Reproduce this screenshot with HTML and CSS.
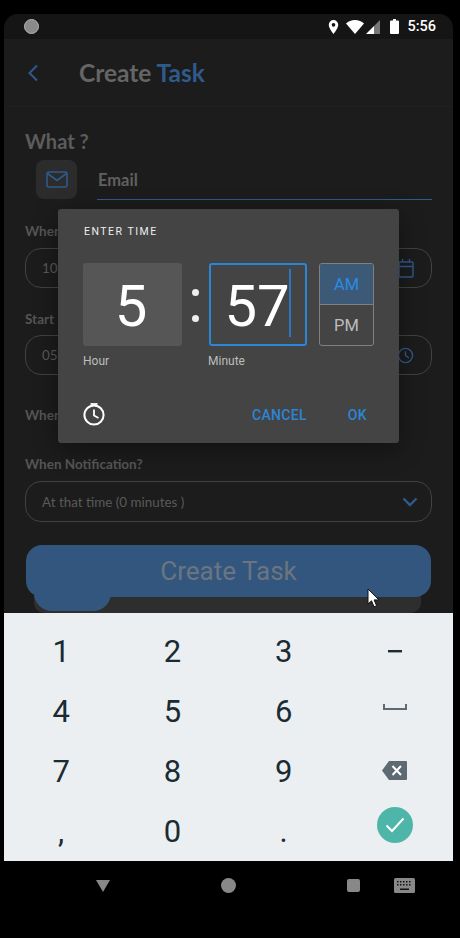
FILE: index.html
```html
<!DOCTYPE html>
<html lang="en">
<head>
<meta charset="utf-8">
<title>Create Task</title>
<link rel="stylesheet" href="styles.css">
</head>
<body>
<div class="phone">
  <div class="screen">
    <div class="status">
      <span class="dot"></span>
      <span class="status-right">
        <svg class="ic" width="11" height="14" viewBox="0 0 12 16"><path fill="#fff" fill-rule="evenodd" d="M6 0a5.400 5.400 0 0 0-5.400 5.400C.6 9.500 6 16 6 16s5.400-6.500 5.400-10.600A5.400 5.400 0 0 0 6 0zm0 3.400a2.100 2.100 0 1 1 0 4.200 2.100 2.100 0 0 1 0-4.200z"/></svg>
        <svg class="ic wifi" width="18" height="14" viewBox="0 0 18 14"><path fill="#fff" d="M0 3.500C2.400 1.300 5.500 0 9 0s6.600 1.300 9 3.500L9 14z"/></svg>
        <svg class="ic signal" width="14" height="14" viewBox="0 0 14 14"><path fill="#fff" d="M0 14 8 6v8z"/><path fill="#777" d="M8 6l6-6v14H8z"/></svg>
        <svg class="ic batt" width="9" height="15" viewBox="0 0 9 15"><path fill="#fff" d="M3 0h3v1.500h2a1 1 0 0 1 1 1V14a1 1 0 0 1-1 1H1a1 1 0 0 1-1-1V2.500a1 1 0 0 1 1-1h2z"/></svg>
        <span class="clock-text">5:56</span>
      </span>
    </div>
    <header class="appbar">
      <svg class="back" width="12" height="18" viewBox="0 0 12 18"><path fill="none" stroke="#2f5a8c" stroke-width="2" d="M10 1.500 2.500 9l7.500 7.500"/></svg>
      <h1 class="title">Create <span class="accent">Task</span></h1>
    </header>
    <main class="form">
      <h2 class="what">What ?</h2>
      <div class="type-row">
        <span class="type-icon">
          <svg width="22" height="17" viewBox="0 0 22 17"><rect x="1" y="1" width="20" height="15" rx="2" fill="none" stroke="#2f5a8c" stroke-width="1.600"/><path fill="none" stroke="#2f5a8c" stroke-width="1.600" d="M1.500 2.500 11 9.500l9.500-7"/></svg>
        </span>
        <span class="type-name">Email</span>
      </div>
      <label class="field-label first">When</label>
      <div class="field">
        <span>10/</span>
        <svg width="16" height="19" viewBox="0 0 16 19"><g fill="none" stroke="#2f5a8c" stroke-width="1.400"><rect x="1" y="3" width="14" height="15" rx="1"/><path d="M1 7.500h14M4.500 0v3M11.500 0v3"/></g></svg>
      </div>
      <label class="field-label start">Start</label>
      <div class="field second">
        <span>05:</span>
        <svg width="17" height="17" viewBox="0 0 18 18"><g fill="none" stroke="#2f5a8c" stroke-width="1.400"><circle cx="9" cy="9" r="7.500"/><path d="M9 4.500V9l3.500 2.500"/></g></svg>
      </div>
      <label class="field-label end">When</label>
      <label class="field-label notif">When Notification?</label>
      <div class="field select">
        <span>At that time (0 minutes )</span>
        <svg class="chev" width="16" height="10" viewBox="0 0 16 10"><path fill="none" stroke="#2f5a8c" stroke-width="2.400" d="M1.500 1.500 8 8l6.500-6.500"/></svg>
      </div>
      <div class="create">Create Task</div>
      <div class="under"><span class="blob"></span></div>
    </main>
    <section class="keyboard">
      <span class="key">1</span><span class="key">2</span><span class="key">3</span>
      <span class="key"><svg width="14" height="3" viewBox="0 0 14 3"><rect width="14" height="2.400" fill="#1f2b33"/></svg></span>
      <span class="key">4</span><span class="key">5</span><span class="key">6</span>
      <span class="key"><svg class="space" width="24" height="6" viewBox="0 0 24 6"><path fill="none" stroke="#5d6a71" stroke-width="2" d="M1 0v5h22V0"/></svg></span>
      <span class="key">7</span><span class="key">8</span><span class="key">9</span>
      <span class="key"><svg class="bksp" width="25" height="19" viewBox="0 0 25 19"><path fill="#5d6a71" d="M7 0h17a1 1 0 0 1 1 1v17a1 1 0 0 1-1 1H7L0 9.500z"/><path fill="none" stroke="#fff" stroke-width="2" d="M10.500 5l8.500 9M19 5l-8.500 9"/></svg></span>
      <span class="key">,</span><span class="key">0</span><span class="key">.</span>
      <span class="key"><span class="done"><svg width="20" height="16" viewBox="0 0 20 16"><path fill="none" stroke="#fff" stroke-width="2" d="M1.500 8.500 7 14 18.500 1.500"/></svg></span></span>
    </section>
    <nav class="navbar">
      <svg class="nav-back" width="14" height="12" viewBox="0 0 14 12"><path fill="#888" d="M0 0h14L7 12z"/></svg>
      <span class="nav-home"></span>
      <span class="nav-recent"></span>
      <svg class="nav-kb" width="21" height="15" viewBox="0 0 21 15"><rect width="21" height="15" rx="1.500" fill="#888"/><g fill="#111"><rect x="3" y="3" width="1.500" height="1.500"/><rect x="6" y="3" width="1.500" height="1.500"/><rect x="9" y="3" width="1.500" height="1.500"/><rect x="12" y="3" width="1.500" height="1.500"/><rect x="15" y="3" width="1.500" height="1.500"/><rect x="3" y="6" width="1.500" height="1.500"/><rect x="6" y="6" width="1.500" height="1.500"/><rect x="9" y="6" width="1.500" height="1.500"/><rect x="12" y="6" width="1.500" height="1.500"/><rect x="15" y="6" width="1.500" height="1.500"/><rect x="6" y="10.500" width="9" height="1.500"/></g></svg>
    </nav>
    <div class="dialog">
      <div class="dialog-title">ENTER TIME</div>
      <div class="time-row">
        <div class="time-col">
          <div class="time-box hour">5</div>
          <div class="time-label">Hour</div>
        </div>
        <div class="colon"><i></i><i></i></div>
        <div class="time-col">
          <div class="time-box minute">57<span class="caret"></span></div>
          <div class="time-label minute-label">Minute</div>
        </div>
        <div class="ampm">
          <span class="am">AM</span>
          <span class="pm">PM</span>
        </div>
      </div>
      <div class="dialog-actions">
        <svg width="22" height="23" viewBox="0 0 22 23"><g fill="none" stroke="#fff"><circle cx="11" cy="12" r="9.600" stroke-width="2"/><path stroke-width="1.800" d="M11 6.500V12.500l4.500 2.500"/><path stroke-width="1.800" d="M7.500 1h7"/></g></svg>
        <span class="btn cancel">CANCEL</span>
        <span class="btn ok">OK</span>
      </div>
    </div>
    <svg class="pointer" width="13" height="21" viewBox="0 0 13 21"><path fill="#fff" stroke="#111" stroke-width="1" d="M1 1v15l3.500-3.200 2.500 6 2.600-1.100-2.500-5.800H12z"/></svg>
  </div>
</div>
</body>
</html>
```
FILE: styles.css
```css
* { box-sizing: border-box; }
html, body { margin: 0; height: 938px; background: #000; overflow: hidden; }
.phone { padding: 14px 7px 0 4px; height: 938px; }
.screen { position: relative; width: 449px; height: 924px; font-family: Lato, sans-serif; }

.status {
  height: 25px; background: #151515; border-radius: 14px 14px 0 0;
  display: flex; align-items: center; justify-content: space-between;
  padding: 0 17px 0 20px;
}
.dot { width: 15px; height: 15px; border-radius: 50%; background: #8a8a8a; border: 1px solid #b5b5b5; }
.status-right { display: flex; align-items: center; }
.ic { display: block; }
.wifi { margin-left: 7px; }
.signal { margin-left: 2px; }
.batt { margin-left: 10px; }
.clock-text { margin-left: 8px; color: #fff; font: 500 14.500px Roboto, sans-serif; }

.appbar {
  height: 68px; background: #1c1c1c; border-bottom: 1px solid #202020;
  display: flex; align-items: center; padding-left: 23px;
}
.back { flex: none; }
.title { margin: 0 0 0 40px; font: 700 24.500px Lato, sans-serif; color: #656565; }
.accent { color: #2f5a8c; }

.form { height: 506px; background: #1c1c1c; padding: 22px 21px 0 21px; overflow: hidden; }
.what { margin: 0; font: 700 20px/24px Lato, sans-serif; color: #5c5c5c; }
.type-row { display: flex; align-items: stretch; height: 40px; margin: 7px 0 0 11px; }
.type-icon {
  width: 41px; height: 39px; background: #2c2c2c; border-radius: 8px;
  display: flex; align-items: center; justify-content: center;
}
.type-name {
  flex: 1; margin-left: 20px; padding: 8px 0 0 1px;
  font: 700 16.500px/24px Lato, sans-serif; color: #606060;
  border-bottom: 1px solid #2f5a8c; height: 40px;
}
.field-label { display: block; font: 700 13.500px/18px Lato, sans-serif; color: #565656; }
.first { margin-top: 22px; }
.start { margin-top: 22px; }
.end { margin-top: 31px; }
.notif { margin-top: 31px; }
.field {
  margin-top: 8px; height: 40px; border: 1px solid #424242; border-radius: 16px;
  display: flex; align-items: center; justify-content: space-between;
  padding: 0 17px 0 16px; font: 400 13.400px Lato, sans-serif; color: #5a5a5a;
}
.second { margin-top: 7px; }
.select { margin-top: 8px; height: 41px; padding-right: 13px; }
.create {
  margin: 23px 1px 0; height: 52px;
  background: #33567f; border-radius: 16px;
  display: flex; align-items: center; justify-content: center;
  font: 400 26px Roboto, sans-serif; color: #6b7580;
  position: relative; z-index: 1;
}
.under {
  position: relative; height: 20px; margin: -4px 11px 0 9px;
  background: #2e2e2e; border-radius: 0 0 10px 10px;
}
.blob {
  position: absolute; left: 0; top: 0; width: 77px; height: 18px;
  background: #33567f; border-radius: 0 0 24px 24px;
}

.keyboard {
  height: 248px; background: #eceff1; padding: 8px 0 0 1.500px;
  display: grid; grid-template-columns: repeat(4, 111.250px); grid-auto-rows: 60px;
  font: 400 31px Roboto, sans-serif; color: #1a2b33;
}
.key { display: flex; align-items: center; justify-content: center; }
.space { margin-top: -8px; }
.bksp { margin-top: -2px; }
.done {
  width: 36px; height: 36px; border-radius: 50%; background: #4db6a8;
  display: flex; align-items: center; justify-content: center; margin-top: -12px;
}

.navbar { position: relative; height: 63px; }
.nav-back, .nav-home, .nav-recent, .nav-kb { position: absolute; }
.nav-back { left: 92px; top: 19px; }
.nav-home { left: 217px; top: 17px; width: 15px; height: 15px; border-radius: 50%; background: #888; }
.nav-recent { left: 343px; top: 18px; width: 13px; height: 13px; border-radius: 2px; background: #888; }
.nav-kb { left: 390px; top: 17px; }

.dialog {
  position: absolute; z-index: 2; left: 54px; top: 195px; width: 341px; height: 234px;
  background: #444; border-radius: 3px; padding: 16px 0 0 25px;
  box-shadow: 0 6px 24px rgba(0,0,0,.4);
  font-family: Roboto, sans-serif;
}
.dialog-title { font: 400 10.500px/13px Roboto, sans-serif; letter-spacing: 1.500px; color: #eee; margin-left: 1px; }
.time-row { display: flex; margin-top: 25px; }
.time-col { width: 98px; }
.time-box {
  width: 98px; height: 83px; display: flex; align-items: center; justify-content: center;
  font: 400 58px Roboto, sans-serif; color: #fff; border-radius: 3px; position: relative;
  padding-top: 3px;
}
.hour { width: 99px; background: #565656; padding-right: 3px; }
.minute { border: 2px solid #2a86d8; padding-right: 2px; }
.caret { position: absolute; right: 14px; top: 4px; width: 2px; height: 68px; background: #2a78c4; }
.time-label { margin-top: 8px; font: 400 12px/15px Roboto, sans-serif; color: #bdbdbd; }
.minute-label { margin-left: -1px; }
.colon {
  width: 28px; height: 83px; display: flex; flex-direction: column; align-items: center;
  justify-content: center; gap: 19px; padding-top: 1px;
}
.colon i { width: 7px; height: 7px; border-radius: 50%; background: #eee; }
.ampm {
  margin-left: 12px; width: 55px; height: 83px; border: 1px solid #808080; border-radius: 3px;
  display: flex; flex-direction: column; font: 400 16.500px Roboto, sans-serif; overflow: hidden;
}
.am, .pm { flex: 1; display: flex; align-items: center; justify-content: center; }
.am { background: #3c5a78; color: #2a8ce0; border-bottom: 1px solid #808080; }
.pm { color: #bdbdbd; }
.dialog-actions { display: flex; align-items: center; margin: 34px 0 0 0; }
.btn { font: 500 14px Roboto, sans-serif; color: #2a86d8; letter-spacing: .3px; }
.cancel { margin-left: 147px; }
.ok { margin-left: 41px; }

.pointer { position: absolute; z-index: 3; left: 363px; top: 574px; }
```
